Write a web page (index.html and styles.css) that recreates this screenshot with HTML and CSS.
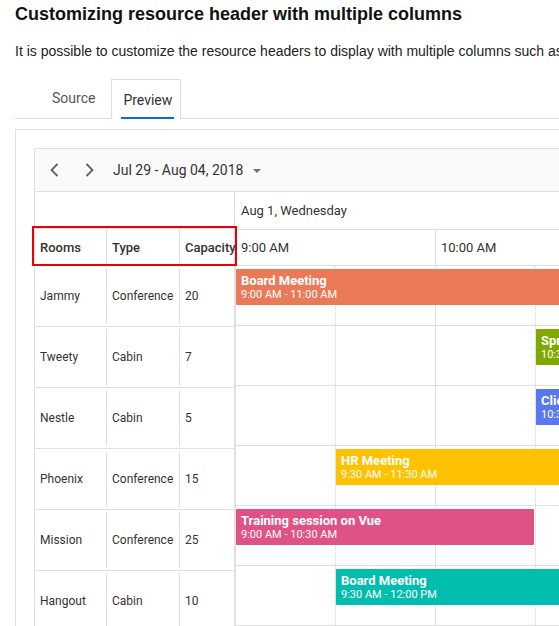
FILE: index.html
```html
<!DOCTYPE html>
<html lang="en">

<head>
    <meta charset="UTF-8">
    <meta name="viewport" content="width=device-width, initial-scale=1.0">
    <title>Resource header with multiple columns</title>
    <link rel="stylesheet" href="styles.css">
</head>

<body>
    <div class="page">
        <h1 class="title">Customizing resource header with multiple columns</h1>
        <p class="intro">It is possible to customize the resource headers to display with multiple columns such as room name, type and capacity.</p>

        <ul class="tabs">
            <li class="tab">Source</li>
            <li class="tab active"><span>Preview</span></li>
        </ul>

        <div class="preview">
            <div class="schedule">
                <div class="toolbar">
                    <button class="nav-btn" title="Previous">
                        <svg width="16" height="16" viewBox="0 0 16 16"><path d="M10.5 2 L4.5 8 L10.5 14" /></svg>
                    </button>
                    <button class="nav-btn" title="Next">
                        <svg width="16" height="16" viewBox="0 0 16 16"><path d="M5.5 2 L11.5 8 L5.5 14" /></svg>
                    </button>
                    <span class="range">Jul 29 - Aug 04, 2018</span>
                    <span class="caret"></span>
                </div>

                <div class="grid">
                    <!-- resource column -->
                    <div class="res-col">
                        <div class="res-top"></div>
                        <div class="res-head">
                            <div class="cell c-room">Rooms</div>
                            <div class="cell c-type">Type</div>
                            <div class="cell c-cap">Capacity</div>
                            <div class="highlight"></div>
                        </div>
                        <div class="res-row">
                            <div class="cell c-room">Jammy</div>
                            <div class="cell c-type">Conference</div>
                            <div class="cell c-cap">20</div>
                        </div>
                        <div class="res-row">
                            <div class="cell c-room">Tweety</div>
                            <div class="cell c-type">Cabin</div>
                            <div class="cell c-cap">7</div>
                        </div>
                        <div class="res-row">
                            <div class="cell c-room">Nestle</div>
                            <div class="cell c-type">Cabin</div>
                            <div class="cell c-cap">5</div>
                        </div>
                        <div class="res-row">
                            <div class="cell c-room">Phoenix</div>
                            <div class="cell c-type">Conference</div>
                            <div class="cell c-cap">15</div>
                        </div>
                        <div class="res-row">
                            <div class="cell c-room">Mission</div>
                            <div class="cell c-type">Conference</div>
                            <div class="cell c-cap">25</div>
                        </div>
                        <div class="res-row">
                            <div class="cell c-room">Hangout</div>
                            <div class="cell c-type">Cabin</div>
                            <div class="cell c-cap">10</div>
                        </div>
                    </div>

                    <!-- timeline -->
                    <div class="time-col">
                        <div class="date-head">Aug 1, Wednesday</div>
                        <div class="time-head">
                            <div class="hour">9:00 AM</div>
                            <div class="hour">10:00 AM</div>
                            <div class="hour">11:00 AM</div>
                        </div>

                        <div class="work-row">
                            <div class="slot"></div><div class="slot"></div><div class="slot"></div><div class="slot"></div><div class="slot"></div><div class="slot"></div>
                            <div class="event orange" style="left: 0; width: 398px;">
                                <div class="subject">Board Meeting</div>
                                <div class="time">9:00 AM - 11:00 AM</div>
                            </div>
                        </div>
                        <div class="work-row">
                            <div class="slot"></div><div class="slot"></div><div class="slot"></div><div class="slot"></div><div class="slot"></div><div class="slot"></div>
                            <div class="event green" style="left: 300px; width: 198px;">
                                <div class="subject">Sprint Planning</div>
                                <div class="time">10:30 AM - 11:30 AM</div>
                            </div>
                        </div>
                        <div class="work-row">
                            <div class="slot"></div><div class="slot"></div><div class="slot"></div><div class="slot"></div><div class="slot"></div><div class="slot"></div>
                            <div class="event blue" style="left: 300px; width: 198px;">
                                <div class="subject">Client Meeting</div>
                                <div class="time">10:30 AM - 11:30 AM</div>
                            </div>
                        </div>
                        <div class="work-row">
                            <div class="slot"></div><div class="slot"></div><div class="slot"></div><div class="slot"></div><div class="slot"></div><div class="slot"></div>
                            <div class="event yellow" style="left: 100px; width: 398px;">
                                <div class="subject">HR Meeting</div>
                                <div class="time">9:30 AM - 11:30 AM</div>
                            </div>
                        </div>
                        <div class="work-row">
                            <div class="slot"></div><div class="slot"></div><div class="slot"></div><div class="slot"></div><div class="slot"></div><div class="slot"></div>
                            <div class="event pink" style="left: 0; width: 298px;">
                                <div class="subject">Training session on Vue</div>
                                <div class="time">9:00 AM - 10:30 AM</div>
                            </div>
                        </div>
                        <div class="work-row">
                            <div class="slot"></div><div class="slot"></div><div class="slot"></div><div class="slot"></div><div class="slot"></div><div class="slot"></div>
                            <div class="event teal" style="left: 100px; width: 498px;">
                                <div class="subject">Board Meeting</div>
                                <div class="time">9:30 AM - 12:00 PM</div>
                            </div>
                        </div>
                    </div>
                </div>
            </div>
        </div>
    </div>
</body>

</html>
```

FILE: styles.css
```css
* {
    box-sizing: border-box;
}

html,
body {
    margin: 0;
    overflow: hidden;
    background: #fff;
}

.page {
    width: 1100px;
    padding-left: 15px;
}

.title {
    margin: 0;
    padding-top: 4px;
    font-family: "Liberation Sans", Arial, sans-serif;
    font-size: 18px;
    line-height: 21px;
    font-weight: bold;
    color: #111;
}

.intro {
    margin: 16px 0 0;
    font-family: "Liberation Sans", Arial, sans-serif;
    font-size: 14px;
    line-height: 20px;
    color: #222;
    white-space: nowrap;
}

/* tabs */
.tabs {
    display: flex;
    list-style: none;
    margin: 18px 0 0;
    padding: 0 0 0 27px;
    height: 40px;
    border-bottom: 1px solid #dedede;
    font-family: Roboto, "Liberation Sans", sans-serif;
    font-size: 14px;
    line-height: 20px;
}

.tab {
    height: 40px;
    padding: 9px 10px 0;
    color: #555;
}

.tab.active {
    margin-left: 6px;
    padding: 0 6px 0 9px;
    border: 1px solid #dedede;
    border-bottom: 0;
    background: #fff;
    color: #333;
}

.tab.active span {
    display: block;
    height: 39px;
    padding: 10px 2px 0;
    border-bottom: 2px solid #0074cc;
}

/* preview pane */
.preview {
    margin-top: 10px;
    padding: 18px;
    border: 1px solid #e0e0e0;
    font-family: Roboto, "Liberation Sans", sans-serif;
    color: #333;
}

.schedule {
    border: 1px solid #e0e0e0;
}

.toolbar {
    display: flex;
    align-items: center;
    height: 43px;
    padding-left: 5px;
    background: #fafafa;
    border-bottom: 1px solid #e0e0e0;
}

.nav-btn {
    display: flex;
    align-items: center;
    justify-content: center;
    width: 30px;
    height: 30px;
    margin-right: 4px;
    padding: 0;
    border: 0;
    background: none;
}

.nav-btn path {
    fill: none;
    stroke: #616161;
    stroke-width: 1.8;
}

.range {
    margin-left: 5px;
    font-size: 14px;
    color: #333;
}

.caret {
    margin: 1px 0 0 10px;
    border-left: 4px solid transparent;
    border-right: 4px solid transparent;
    border-top: 4px solid #707070;
}

/* grid */
.grid {
    display: flex;
}

.res-col {
    flex: 0 0 200px;
    border-right: 1px solid #e0e0e0;
    font-size: 12px;
}

.res-top {
    height: 37px;
    border-bottom: 1px solid #e0e0e0;
}

.res-head {
    position: relative;
    display: flex;
    height: 37px;
    border-bottom: 1px solid #e0e0e0;
    font-size: 13px;
    font-weight: 500;
}

.res-row {
    display: flex;
    height: 61px;
    padding: 2px 0;
    border-bottom: 1px solid #e0e0e0;
}

.cell {
    display: flex;
    align-items: center;
    padding-left: 5px;
    white-space: nowrap;
}

.c-room {
    width: 72px;
    border-right: 1px solid #e0e0e0;
}

.c-type {
    width: 73px;
    border-right: 1px solid #e0e0e0;
}

.c-cap {
    width: 54px;
}

.highlight {
    position: absolute;
    top: -3px;
    left: -3px;
    width: 205px;
    height: 40px;
    border: 2px solid #e8000b;
    z-index: 2;
}

.time-col {
    flex: 1;
    font-size: 13px;
}

.date-head {
    display: flex;
    align-items: center;
    height: 38px;
    padding-left: 6px;
    border-bottom: 1px solid #e0e0e0;
}

.time-head {
    display: flex;
    height: 36px;
    padding-left: 1px;
    border-bottom: 1px solid #e0e0e0;
}

.hour {
    display: flex;
    align-items: center;
    flex: 0 0 200px;
    padding-left: 5px;
    border-right: 1px solid #e0e0e0;
}

.work-row {
    position: relative;
    display: flex;
    height: 60px;
    border-left: 1px solid #e0e0e0;
    border-bottom: 1px solid #e0e0e0;
}

.slot {
    flex: 0 0 100px;
    border-right: 1px dotted #d6d6d6;
}

.slot:nth-child(2n) {
    border-right: 1px solid #e0e0e0;
}

/* appointments */
.event {
    position: absolute;
    top: 3px;
    height: 36px;
    padding: 5px 0 0 5px;
    overflow: hidden;
    white-space: nowrap;
    color: #fff;
    border-radius: 1px;
}

.subject {
    font-size: 13px;
    line-height: 14px;
    font-weight: bold;
}

.time {
    font-size: 11px;
    line-height: 14px;
}

.orange { background: #ea7a57; }
.green { background: #7fa900; }
.blue { background: #5978ee; }
.yellow { background: #fec200; }
.pink { background: #df5286; }
.teal { background: #00bdae; }
```
